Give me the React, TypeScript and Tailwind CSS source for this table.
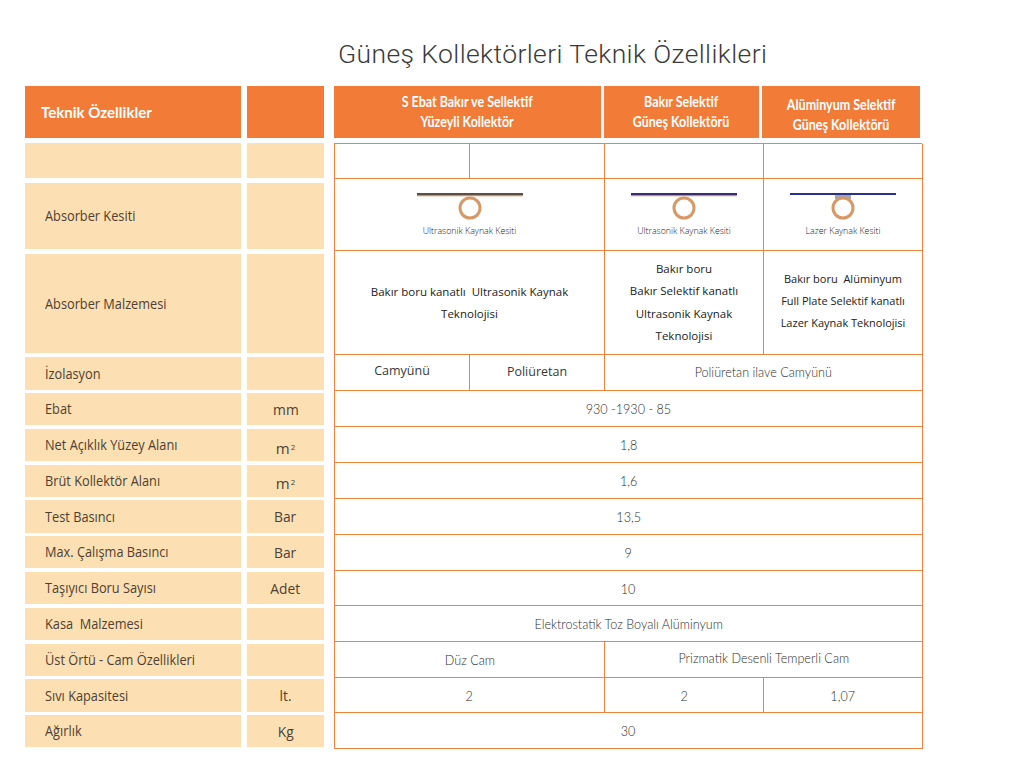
import React from "react";

const leftRows: { label: string; unit?: React.ReactNode; h: string; mt: string }[] = [
  { label: "", h: "h-[35px]", mt: "mt-0" },
  { label: "Absorber Kesiti", h: "h-[66px]", mt: "mt-[5px]" },
  { label: "Absorber Malzemesi", h: "h-[99px]", mt: "mt-[5px]" },
  { label: "İzolasyon", h: "h-[33px]", mt: "mt-[4px]" },
  { label: "Ebat", unit: "mm", h: "h-[32.3px]", mt: "mt-[3px]" },
  { label: "Net Açıklık Yüzey Alanı", unit: "m2", h: "h-[32.3px]", mt: "mt-[3.5px]" },
  { label: "Brüt Kollektör Alanı", unit: "m2", h: "h-[32.3px]", mt: "mt-[3.5px]" },
  { label: "Test Basıncı", unit: "Bar", h: "h-[32.3px]", mt: "mt-[3.5px]" },
  { label: "Max. Çalışma Basıncı", unit: "Bar", h: "h-[32.3px]", mt: "mt-[3.5px]" },
  { label: "Taşıyıcı Boru Sayısı", unit: "Adet", h: "h-[32.3px]", mt: "mt-[3.5px]" },
  { label: "Kasa  Malzemesi", h: "h-[32.3px]", mt: "mt-[3.5px]" },
  { label: "Üst Örtü - Cam Özellikleri", h: "h-[32.3px]", mt: "mt-[3.5px]" },
  { label: "Sıvı Kapasitesi", unit: "lt.", h: "h-[32.3px]", mt: "mt-[3.5px]" },
  { label: "Ağırlık", unit: "Kg", h: "h-[32.3px]", mt: "mt-[3.5px]" },
];

function Unit({ u }: { u?: React.ReactNode }) {
  if (u === "m2")
    return (
      <span className="relative top-[3px]">
        m<sup className="text-[8px] relative -top-[4px] ml-[1px]">2</sup>
      </span>
    );
  return <span className="inline-block scale-x-[0.92]">{u}</span>;
}

function Absorber({ top, label }: { top: "copper" | "purple" | "blue"; label: string }) {
  const lineTop = top === "copper" ? "#5e4f40" : top === "purple" ? "#3a2a70" : "#2b2f8f";
  return (
    <div className="flex flex-col items-center pt-[11px]">
      <svg width="110" height="32" viewBox="0 0 110 32">
        <line x1="2" y1="4" x2="108" y2="4" stroke={lineTop} strokeWidth="2" />
        {top !== "blue" && <line x1="2" y1="5.6" x2="108" y2="5.6" stroke="#c9915e" strokeWidth="1.2" />}
        {top === "blue" && <rect x="47" y="5" width="16" height="4" fill="#a3a8ae" />}
        <circle cx="55" cy="18" r="10" fill="#fff" stroke="#d89866" strokeWidth="3" />
      </svg>
      <div className="mt-[3px] text-[8.8px] leading-[12px] text-[#222] font-['Open_Sans',sans-serif]">{label}</div>
    </div>
  );
}

const cell = "border-r-[1.5px] border-b-[1.5px] border-[#f0843a] flex items-center justify-center text-center";
const narrow = "inline-block scale-x-[0.9] whitespace-nowrap";
const headNarrow = "inline-block scale-x-[0.86] whitespace-nowrap";
const sans = "font-['Open_Sans',sans-serif]";

export default function App() {
  return (
    <div className="w-[1024px] h-[773px] bg-white font-['Lato',sans-serif] overflow-hidden">
      <h1 className="pl-[338px] pt-[37px] h-[86px] text-[26.5px] leading-[34px] text-[#3a3a3a] font-['Roboto',sans-serif] font-light tracking-[0.4px]">
        Güneş Kollektörleri Teknik Özellikleri
      </h1>

      <div className="flex pl-[25px]">
        {/* left labels */}
        <div className="w-[216px] flex flex-col">
          <div className="h-[52px] bg-[#f27c37] flex items-center pl-[16px] text-white font-bold text-[16px] mb-[5px]">
            <span className="inline-block scale-x-[0.94] origin-left">Teknik Özellikler</span>
          </div>
          {leftRows.map((r, i) => (
            <div key={i} className={`${r.h} ${r.mt} ${sans} bg-[#fcdfb2] flex items-center pl-[20px] text-[14.5px] text-[#4f3f33]`}>
              <span className="inline-block scale-x-[0.88] origin-left whitespace-pre">{r.label}</span>
            </div>
          ))}
        </div>

        {/* units */}
        <div className="w-[77px] ml-[6px] flex flex-col">
          <div className="h-[52px] bg-[#f27c37] mb-[5px]" />
          {leftRows.map((r, i) => (
            <div key={i} className={`${r.h} ${r.mt} ${sans} bg-[#fcdfb2] flex items-center justify-center text-[15px] text-[#4f3f33]`}>
              <Unit u={r.unit} />
            </div>
          ))}
        </div>

        {/* right table */}
        <div className="ml-[10px] w-[588px] flex flex-col">
          <div className="h-[52px] flex gap-[3px] text-white font-bold text-[14.5px] leading-[20px] mb-[5px]">
            <div className="w-[267px] bg-[#f27c37] flex flex-col items-center justify-center">
              <span className={headNarrow}>S Ebat Bakır ve Sellektif</span>
              <span className={headNarrow}>Yüzeyli Kollektör</span>
            </div>
            <div className="w-[155px] bg-[#f27c37] flex flex-col items-center justify-center">
              <span className={headNarrow}>Bakır Selektif</span>
              <span className={headNarrow}>Güneş Kollektörü</span>
            </div>
            <div className="w-[158px] bg-[#f27c37] flex flex-col items-center justify-center pt-[6px]">
              <span className={headNarrow}>Alüminyum Selektif</span>
              <span className={headNarrow}>Güneş Kollektörü</span>
            </div>
          </div>

          <div className="grid grid-cols-[135px_135px_159px_159px] grid-rows-[35px_72px_104px_36px_36px_36px_36px_36px_36px_35px_36px_36px_35px_36px] border-l-[1.5px] border-t-[1.5px] border-[#f0843a] text-[#2e2e2e] text-[14px] font-light">
            <div className={cell} />
            <div className={cell} />
            <div className={cell} />
            <div className={cell} />

            <div className={`${cell} col-span-2 !items-start`}>
              <Absorber top="copper" label="Ultrasonik Kaynak Kesiti" />
            </div>
            <div className={`${cell} !items-start`}>
              <Absorber top="purple" label="Ultrasonik Kaynak Kesiti" />
            </div>
            <div className={`${cell} !items-start`}>
              <Absorber top="blue" label="Lazer Kaynak Kesiti" />
            </div>

            <div className={`${cell} ${sans} col-span-2 text-[11.5px] leading-[22px] text-[#222] font-normal`}>
              <div>
                Bakır boru kanatlı&nbsp; Ultrasonik Kaynak
                <br />
                Teknolojisi
              </div>
            </div>
            <div className={`${cell} ${sans} text-[11.5px] leading-[22.5px] text-[#222] font-normal`}>
              <div>
                Bakır boru
                <br />
                Bakır Selektif kanatlı
                <br />
                Ultrasonik Kaynak
                <br />
                Teknolojisi
              </div>
            </div>
            <div className={`${cell} ${sans} text-[11px] leading-[22px] text-[#222] pb-[4px] font-normal`}>
              <div>
                Bakır boru&nbsp; Alüminyum
                <br />
                Full Plate Selektif kanatlı
                <br />
                Lazer Kaynak Teknolojisi
              </div>
            </div>

            <div className={`${cell} ${sans} pb-[2px] text-[12.5px] font-normal text-[#3a3a3a]`}>Camyünü</div>
            <div className={`${cell} ${sans} text-[12.5px] font-normal text-[#3a3a3a]`}>Poliüretan</div>
            <div className={`${cell} col-span-2 pb-[2px]`}>
              <span className={narrow}>Poliüretan ilave Camyünü</span>
            </div>

            <div className={`${cell} col-span-4`}>
              <span className={narrow}>930 -1930 - 85</span>
            </div>
            <div className={`${cell} col-span-4`}>
              <span className={narrow}>1,8</span>
            </div>
            <div className={`${cell} col-span-4`}>
              <span className={narrow}>1,6</span>
            </div>
            <div className={`${cell} col-span-4`}>
              <span className={narrow}>13,5</span>
            </div>
            <div className={`${cell} col-span-4`}>
              <span className={narrow}>9</span>
            </div>
            <div className={`${cell} col-span-4`}>
              <span className={narrow}>10</span>
            </div>
            <div className={`${cell} col-span-4`}>
              <span className={narrow}>Elektrostatik Toz Boyalı Alüminyum</span>
            </div>

            <div className={`${cell} col-span-2`}>
              <span className={narrow}>Düz Cam</span>
            </div>
            <div className={`${cell} col-span-2 pb-[4px]`}>
              <span className={narrow}>Prizmatik Desenli Temperli Cam</span>
            </div>

            <div className={`${cell} col-span-2`}>
              <span className={narrow}>2</span>
            </div>
            <div className={cell}>
              <span className={narrow}>2</span>
            </div>
            <div className={cell}>
              <span className={narrow}>1,07</span>
            </div>

            <div className={`${cell} col-span-4`}>
              <span className={narrow}>30</span>
            </div>
          </div>
        </div>
      </div>
    </div>
  );
}
